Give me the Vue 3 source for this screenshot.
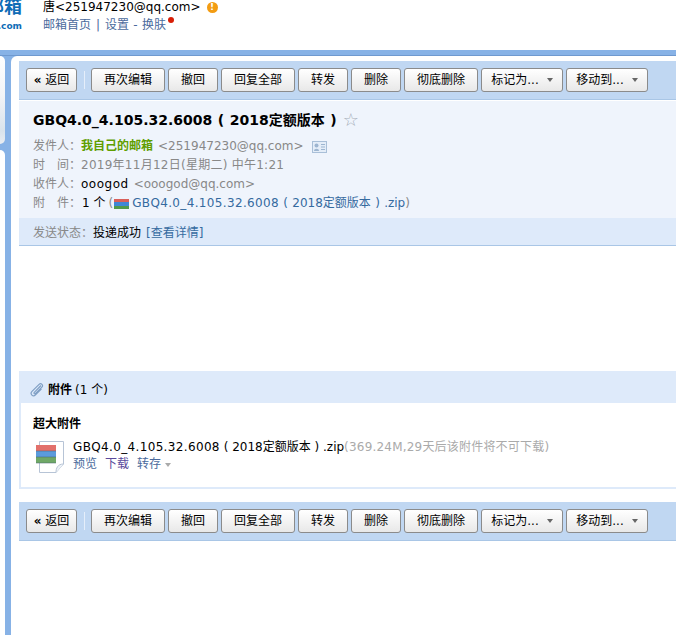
<script setup>
const tools = [
  { label: '再次编辑', w: 74 },
  { label: '撤回', w: 50 },
  { label: '回复全部', w: 74 },
  { label: '转发', w: 50 },
  { label: '删除', w: 50 },
  { label: '彻底删除', w: 74 },
  { label: '标记为...', w: 82, menu: true },
  { label: '移动到...', w: 82, menu: true }
]
</script>

<template>
  <div class="page">
    <header class="top">
      <div class="logo"><span class="logo-cn">邮箱</span><span class="logo-com">.com</span></div>
      <div class="account">
        <div class="who">
          <span>唐&lt;251947230@qq.com&gt;</span>
          <span class="warn">!</span>
        </div>
        <div class="nav">
          <a>邮箱首页</a><i class="pipe">|</i><a>设置</a><i class="dash">-</i><a>换肤</a><b class="dot"></b>
        </div>
      </div>
    </header>
    <div class="frame">
      <aside class="side"><div class="side-top"></div><div class="side-rest"></div></aside>
      <main class="main">
        <div class="toolbar">
          <button class="btn back"><span class="raquo">«</span> 返回</button>
          <span class="sep"></span>
          <div class="tool-group">
            <button v-for="t in tools" :key="t.label" class="btn" :style="{ width: t.w + 'px' }">
              {{ t.label }}<span v-if="t.menu" class="caret"></span>
            </button>
          </div>
        </div>
        <section class="head">
          <h1 class="subject"><span class="subject-text">GBQ4.0_4.105.32.6008 ( 2018定额版本 )</span><span class="star">☆</span></h1>
          <div class="row"><span class="k">发件人：</span><span class="green">我自己的邮箱</span><span class="gray addr">&lt;251947230@qq.com&gt;</span>
            <svg class="card" width="15" height="12" viewBox="0 0 15 12"><rect x=".5" y=".5" width="14" height="11" fill="#e4edf8" stroke="#a9bfd8"/><circle cx="4.500" cy="4.500" r="2" fill="#9db5d0"/><path d="M2 10c0-3 5-3 5 0z" fill="#9db5d0"/><path d="M9 3.500h4M9 6h4M9 8.500h4" stroke="#9db5d0"/></svg>
          </div>
          <div class="row"><span class="k">时　间：</span><span class="gray date">2019年11月12日(星期二) 中午1:21</span></div>
          <div class="row"><span class="k">收件人：</span><span class="black name">ooogod</span><span class="gray addr">&lt;ooogod@qq.com&gt;</span></div>
          <div class="row"><span class="k">附　件：</span><span class="black count">1 个</span><span class="gray paren">(</span>
            <svg class="zip-mini" width="15" height="10" viewBox="0 0 15 10"><rect width="15" height="3" fill="#d9605a"/><rect y="3" width="15" height="4" fill="#3f87d6"/><rect y="7" width="15" height="3" fill="#4f9a4c"/></svg>
            <a class="link"><span class="stem">GBQ4.0_4.105.32.6008</span> ( 2018定额版本 ) .zip</a><span class="gray">)</span>
          </div>
        </section>
        <div class="status"><span class="k">发送状态：</span><span class="black">投递成功</span><a class="link detail">[查看详情]</a></div>
        <div class="body-space"></div>
        <section class="attach">
          <div class="attach-title">
            <svg width="14" height="15" viewBox="0 0 14 15" fill="none" stroke="#7f9fc4" stroke-width="1.200"><path d="M11 2.500 4.300 9.300c-1 1 .3 2.200 1.300 1.200l6.300-6.400c2-2-1-4.500-2.800-2.700L2 8.400c-2.500 2.600 1 6 3.500 3.500l6-6"/></svg>
            <b>附件</b><span class="count-title">(1 个)</span>
          </div>
          <div class="attach-body">
            <div class="big-title">超大附件</div>
            <div class="file">
              <svg class="file-icon" width="28" height="32" viewBox="0 0 28 32">
                <path d="M3.500 .5H27.500V23L20 31.500H3.500z" fill="#fff" stroke="#b7c4d6"/>
                <path d="M20 31.500c0-4 1.500-8.500 7.500-8.500" fill="#eef2f7" stroke="#b7c4d6"/>
                <rect x="0" y="4" width="20" height="6" fill="#e2706b"/><rect x="0" y="10" width="20" height="6" fill="#5b9bdc"/><rect x="0" y="16" width="20" height="6" fill="#6fa866"/>
                <path d="M0 10h20M0 16h20M0 22h20" stroke="#44606f" stroke-opacity=".5"/>
              </svg>
              <div class="file-text">
                <div class="fname"><span class="stem">GBQ4.0_4.105.32.6008</span> ( 2018定额版本 ) .zip<span class="fmeta">(369.24M,29天后该附件将不可下载)</span></div>
                <div class="factions"><a>预览</a><a class="visited">下载</a><a>转存</a><span class="caret soft"></span></div>
              </div>
            </div>
          </div>
        </section>
        <div class="toolbar bottom">
          <button class="btn back"><span class="raquo">«</span> 返回</button>
          <span class="sep"></span>
          <div class="tool-group">
            <button v-for="t in tools" :key="t.label" class="btn" :style="{ width: t.w + 'px' }">
              {{ t.label }}<span v-if="t.menu" class="caret"></span>
            </button>
          </div>
        </div>
      </main>
    </div>
  </div>
</template>

<style>
html, body { margin: 0; background: #fff; overflow: hidden; }
</style>

<style scoped>
.page { width: 676px; height: 635px; overflow: hidden; font: 12px/18px "DejaVu Sans", "Noto Sans CJK SC", sans-serif; color: #000; background: #fff; }
.top { height: 50px; position: relative; box-sizing: border-box; padding-left: 43px; }
.logo { position: absolute; right: 654px; top: -5px; text-align: right; color: #0f6cb6; font-weight: 700; white-space: nowrap; }
.logo-cn { display: block; font-size: 18px; line-height: 24px; }
.logo-com { display: block; font-size: 9px; line-height: 12px; margin-top: 1px; }
.who { display: flex; align-items: center; height: 14px; line-height: 14px; white-space: nowrap; }
.warn { width: 11px; height: 11px; margin-left: 6px; border-radius: 50%; background: #f39c12; color: #fff; font: bold 9px/11px "DejaVu Sans", sans-serif; text-align: center; }
.nav { margin-top: 3px; height: 16px; line-height: 16px; color: #4a6a9c; display: flex; align-items: flex-start; }
.pipe, .dash { font-style: normal; color: #4a6a9c; }
.pipe { margin: 0 4px 0 4px; width: 6px; text-align: center; }
.dash { margin: 0 4px; width: 5px; text-align: center; }
.dot { width: 6px; height: 6px; border-radius: 50%; background: #d81e06; margin-top: 0; margin-left: 2px; }
.frame { height: 585px; display: flex; background: linear-gradient(#87b2e6 0 5px, #6f99cf 5px 6px, #87b2e6 6px); box-sizing: border-box; padding-top: 6px; }
.side { width: 5px; display: flex; flex-direction: column; gap: 6px; flex: none; }
.side-top { height: 88px; flex: none; border-radius: 0 5px 5px 0; background: linear-gradient(#fff, #f2f4f7 45%, #d9e3ec 85%, #e9edf2); }
.side-rest { flex: 1; background: #fff; border-top-right-radius: 5px; }
.main { margin-left: 6px; flex: 1; background: #fff; border-top-left-radius: 6px; padding: 5px 0 0 8px; min-width: 0; }
.toolbar { background: #c0d7f2; border-bottom: 1px solid #a9c6e6; display: flex; align-items: center; padding: 0 0 0 7px; box-sizing: border-box; height: 39px; }
.btn { height: 24px; box-sizing: border-box; padding: 0; border: 1px solid #8b8b8b; border-radius: 3px; background: linear-gradient(#fff, #e8e8e8); color: #000; font: 12px/22px "DejaVu Sans", "Noto Sans CJK SC", sans-serif; white-space: nowrap; flex: none; }
.back { width: 51px; }
.raquo { font-weight: 700; }
.sep { width: 1px; height: 18px; margin: 0 6px 0 7px; background: #e5eefa; flex: none; }
.tool-group { display: flex; gap: 3px; }
.caret { display: inline-block; width: 0; height: 0; margin-left: 8px; vertical-align: 2px; border-style: solid; border-color: #666 transparent transparent; border-width: 4px 3.500px 0; }
.head { background: #eff4fc; height: 118px; box-sizing: border-box; border-top: 1px solid #fff; padding: 9px 0 0 14px; }
.subject { margin: 0 0 7px; font-size: 14px; font-weight: 700; line-height: 20px; height: 20px; white-space: nowrap; display: flex; align-items: center; }
.subject-text { word-spacing: .7px; }
.star { font-size: 18px; font-weight: 400; color: #a5aeb9; margin-left: 6px; }
.row { height: 19px; line-height: 19px; white-space: nowrap; display: flex; align-items: center; color: #888; }
.k { color: #888; }
.green { color: #5f9e00; font-weight: 700; }
.gray { color: #888; white-space: pre; }
.addr { margin-left: 5px; }
.date { letter-spacing: .26px; }
.name { letter-spacing: .5px; }
.stem { letter-spacing: .35px; }
.card { margin-left: 8px; }
.black { color: #000; }
.count { margin-left: 1px; }
.paren { margin-left: 3px; }
.zip-mini { margin: 0 3px 0 1px; }
.link { color: #356a9f; word-spacing: .5px; }
.status { height: 28px; box-sizing: border-box; background: #deeafa; border-bottom: 1px solid #a9c6e6; padding: 6px 0 0 14px; line-height: 19px; white-space: nowrap; color: #888; }
.detail { margin-left: 5px; }
.body-space { height: 125px; }
.attach { border: 2px solid #deeafa; border-width: 0 0 2px 2px; }
.attach-title { height: 32px; box-sizing: border-box; margin-left: -2px; background: #deeafa; display: flex; align-items: center; padding: 6px 0 0 11px; white-space: nowrap; }
.attach-title svg { margin-right: 4px; }
.count-title { margin-left: 3px; }
.attach-body { height: 84px; box-sizing: border-box; padding: 12px 0 0 12px; background: #fff; }
.big-title { font-weight: 700; line-height: 18px; }
.file { display: flex; margin-top: 6px; }
.file-icon { margin: 2px 9px 0 3px; flex: none; }
.fname { line-height: 17px; white-space: nowrap; }
.fmeta { color: #aaa; letter-spacing: .2px; }
.factions { display: flex; align-items: center; color: #4a6a9c; line-height: 17px; gap: 8px; }
.visited { color: #5b4a9c; }
.soft { margin-left: -4px; border-top-color: #aaa; border-width: 4px 3px 0; }
.bottom { margin-top: 13px; }
</style>
